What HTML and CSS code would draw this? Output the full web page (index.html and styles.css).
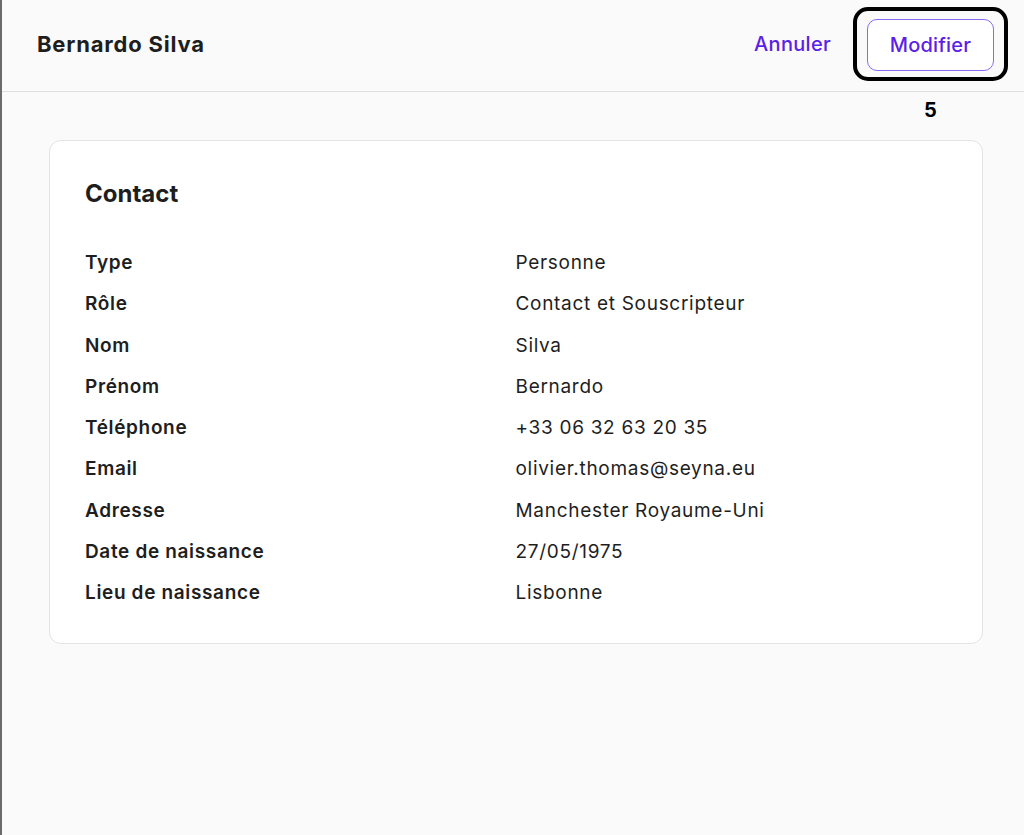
FILE: index.html
```html
<!DOCTYPE html>
<html lang="fr">
<head>
<meta charset="utf-8">
<title>Bernardo Silva</title>
<link rel="stylesheet" href="styles.css">
</head>
<body>
<div class="page">
  <header class="topbar">
    <h1 class="title">Bernardo Silva</h1>
    <div class="actions">
      <button class="btn-link" type="button">Annuler</button>
      <div class="highlight-wrap">
        <button class="btn-outline" type="button">Modifier</button>
        <span class="highlight"></span>
        <span class="step">5</span>
      </div>
    </div>
  </header>
  <main class="content">
    <section class="card">
      <h2 class="card-title">Contact</h2>
      <dl class="fields">
        <dt>Type</dt><dd>Personne</dd>
        <dt>Rôle</dt><dd>Contact et Souscripteur</dd>
        <dt>Nom</dt><dd>Silva</dd>
        <dt>Prénom</dt><dd>Bernardo</dd>
        <dt>Téléphone</dt><dd>+33 06 32 63 20 35</dd>
        <dt>Email</dt><dd>olivier.thomas@seyna.eu</dd>
        <dt>Adresse</dt><dd>Manchester Royaume-Uni</dd>
        <dt>Date de naissance</dt><dd>27/05/1975</dd>
        <dt>Lieu de naissance</dt><dd>Lisbonne</dd>
      </dl>
    </section>
  </main>
</div>
</body>
</html>
```
FILE: styles.css
```css
* { box-sizing: border-box; }
html, body { margin: 0; padding: 0; }
body {
  font-family: Inter, "Noto Sans", sans-serif;
  background: #fafafa;
  color: #1f1f1f;
}
.page {
  min-height: 835px;
  border-left: 2px solid #6b6b6b;
  background: #fafafa;
}
.topbar {
  height: 92px;
  border-bottom: 1px solid #dedede;
  display: flex;
  align-items: center;
  justify-content: space-between;
  padding: 0 30px 3px 35px;
}
.title {
  margin: 0;
  font-size: 22px;
  font-weight: 700;
  color: #1e1e1e;
  letter-spacing: 0.8px;
}
.actions {
  display: flex;
  align-items: center;
  gap: 36px;
}
.btn-link {
  font-family: inherit;
  font-size: 20px;
  font-weight: 500;
  color: #5b1fe6;
  background: none;
  border: 0;
  padding: 0;
  letter-spacing: 0.3px;
  cursor: pointer;
}
.highlight-wrap {
  position: relative;
  top: 1px;
}
.btn-outline {
  display: block;
  font-family: inherit;
  font-size: 20px;
  font-weight: 500;
  color: #5b1fe6;
  background: #fff;
  border: 1px solid #8a6af2;
  border-radius: 10px;
  width: 127px;
  height: 52px;
  padding: 0;
  letter-spacing: 0.2px;
  cursor: pointer;
}
.highlight {
  position: absolute;
  left: -14px;
  right: -14px;
  top: -12px;
  bottom: -10px;
  border: 4px solid #000;
  border-radius: 15px;
  pointer-events: none;
}
.step {
  position: absolute;
  left: 0;
  right: 0;
  top: 79px;
  text-align: center;
  font-size: 20px;
  font-weight: 700;
  color: #000;
}
.content {
  padding: 48px 41px 0 47px;
}
.card {
  background: #fff;
  border: 1px solid #e3e3e3;
  border-radius: 12px;
  padding: 36px 36px 30px 35px;
}
.card-title {
  margin: 0 0 32px;
  font-size: 24px;
  line-height: 33px;
  font-weight: 700;
  color: #1e1e1e;
}
.fields {
  margin: 0;
  display: grid;
  grid-template-columns: 1fr 1fr;
  grid-auto-rows: 41.25px;
  align-items: center;
}
.fields dt {
  font-size: 19px;
  font-weight: 600;
  color: #1e1e1e;
  letter-spacing: 0.65px;
}
.fields dd {
  margin: 0;
  font-size: 19px;
  font-weight: 400;
  color: #1e1e1e;
  letter-spacing: 0.7px;
}
```
